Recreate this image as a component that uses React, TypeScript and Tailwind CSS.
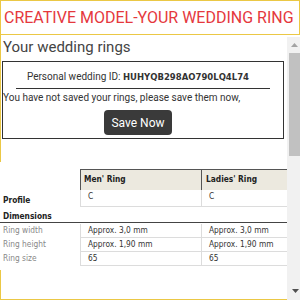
import React from "react";

const roboto = "[font-family:Roboto,'Liberation_Sans',sans-serif]";
const tbl = "[font-family:'DejaVu_Sans_Condensed','Liberation_Sans',sans-serif]";

function Row({ label, men, ladies }: { label: string; men: string; ladies: string }) {
  return (
    <>
      <div className="h-[14px] pl-[3px] pt-[1px] text-[#888] leading-[10px] whitespace-nowrap">{label}</div>
      <div className="h-[14px] border-l border-b border-[#dcdcdc] pl-[7px] pt-[1px] leading-[10px] text-[#333] whitespace-nowrap">{men}</div>
      <div className="h-[14px] border-l border-b border-[#dcdcdc] pl-[7px] pt-[1px] leading-[10px] text-[#333] whitespace-nowrap">{ladies}</div>
    </>
  );
}

export default function App() {
  return (
    <div className="w-[300px] h-[300px] overflow-hidden bg-white">
      <div className={`h-[35px] border border-[#ebc845] flex items-center pl-[3px] ${roboto}`}>
        <span className="text-[16px] leading-[19px] text-[#e5383d] whitespace-nowrap">CREATIVE MODEL-YOUR WEDDING RING</span>
      </div>
      <div className="flex w-[300px]">
        <div className="w-[287px] h-[265px] shrink-0 border-l border-b border-[#ebc845] flex flex-col">
          <div className={`pt-[3px] pl-[2px] text-[15px] leading-[18px] text-[#444] ${roboto}`}>Your wedding rings</div>
          <div className={`mt-[5px] ml-[1px] w-[282px] border border-[#333] pt-[9px] pb-[3px] ${roboto}`}>
            <div className="flex justify-center items-baseline pr-[10px] text-[10px] leading-[12px] text-[#333] whitespace-nowrap">
              <span>Personal wedding ID:&nbsp;</span>
              <span className="[font-family:'DejaVu_Sans',sans-serif] font-bold text-[8.5px] text-[#333]">HUHYQB298AO790LQ4L74</span>
            </div>
            <div className="mt-[5px] mx-auto w-[254px] h-px bg-[#333]" />
            <div className="mt-[3px] text-[10px] leading-[12px] text-[#333] whitespace-nowrap">
              You have not saved your rings, please save them now,
            </div>
            <div className="mt-[6px] flex justify-center pr-[10px]">
              <button className="w-[68px] h-[25px] rounded-[4px] bg-[#3a3a3a] text-white text-[12px] leading-[14px] flex items-center justify-center">
                Save Now
              </button>
            </div>
          </div>
          <div className={`mt-[23px] -ml-px bg-white pt-[7px] h-[108px] text-[8.3px] ${tbl}`}>
            <div className="grid grid-cols-[80px_121px_1fr]">
              <div className="h-[21px]" />
              <div className="h-[21px] border-t border-l border-[#555] bg-[#ece9df] pl-[3px] pt-[4px] leading-[10px] font-bold text-[#222] whitespace-nowrap">Men' Ring</div>
              <div className="h-[21px] border-t border-l border-[#555] bg-[#ece9df] pl-[4px] pt-[4px] leading-[10px] font-bold text-[#222] whitespace-nowrap">Ladies' Ring</div>

              <div className="h-[17px] pl-[3px] pt-[5px] leading-[10px] font-bold text-[#222]">Profile</div>
              <div className="h-[17px] border-l border-b border-[#dcdcdc] pl-[7px] pt-[1px] leading-[10px] text-[#333]">C</div>
              <div className="h-[17px] border-l border-b border-[#dcdcdc] pl-[7px] pt-[1px] leading-[10px] text-[#333]">C</div>

              <div className="col-span-3 h-[16px] border-b border-[#444] pl-[3px] pt-[4px] leading-[10px] font-bold text-[#222]">Dimensions</div>
              <div className="col-span-3 h-px" />

              <Row label="Ring width" men="Approx. 3,0 mm" ladies="Approx. 3,0 mm" />
              <Row label="Ring height" men="Approx. 1,90 mm" ladies="Approx. 1,90 mm" />
              <Row label="Ring size" men="65" ladies="65" />
            </div>
          </div>
        </div>
        <div className="w-[13px] h-[263px] mt-[2px] shrink-0 bg-[#f1f1f1] flex flex-col">
          <div className="h-[16px] pt-[6px] pl-[4px]">
            <svg width="7" height="4" viewBox="0 0 7 4" className="block">
              <polygon points="3.5,0 7,4 0,4" fill="#a3a3a3" />
            </svg>
          </div>
          <div className="ml-[2px] w-[11px] h-[103px] bg-[#c1c1c1]" />
          <div className="flex-1" />
          <div className="pl-[5px] mb-[7px]">
            <svg width="7" height="4" viewBox="0 0 7 4" className="block">
              <polygon points="0,0 7,0 3.5,4" fill="#505050" />
            </svg>
          </div>
        </div>
      </div>
    </div>
  );
}
